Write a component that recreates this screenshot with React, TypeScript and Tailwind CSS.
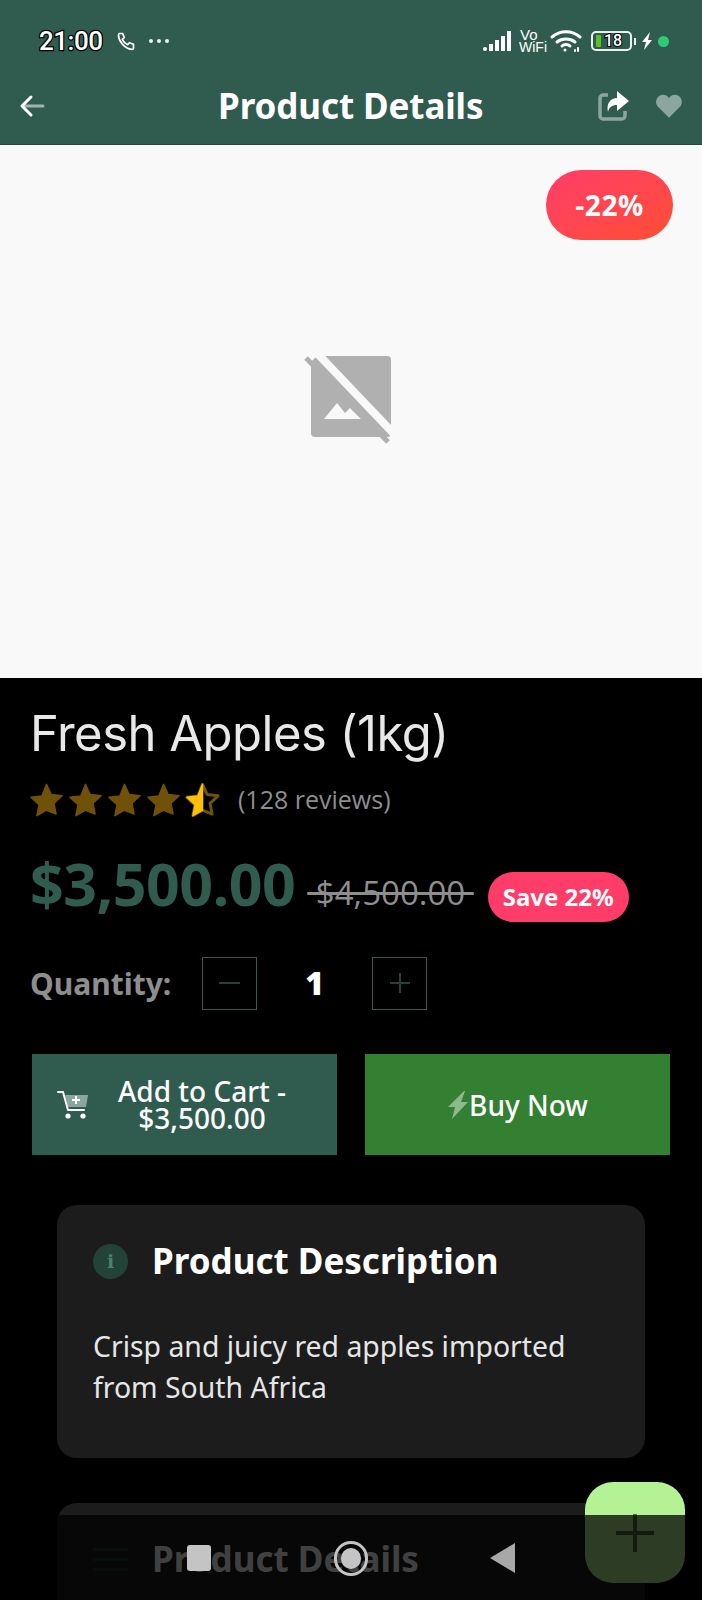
import React from "react";

const Star = ({ half }: { half?: boolean }) => {
  const d = "M12 1.6l3.1 6.7 7.3.9-5.4 5 1.4 7.2L12 18.8l-6.4 3.6L7 15.2l-5.4-5 7.3-.9z";
  return (
    <svg width="39" height="36" viewBox="0 0 24 24" className="shrink-0">
      {half ? (
        <>
          <path d={d} fill="none" stroke="#6f5208" strokeWidth="2" strokeLinejoin="round" />
          <path d="M12 1.6v17.2l-6.4 3.6L7 15.2l-5.4-5 7.3-.9z" fill="#ffc107" stroke="#ffc107" strokeWidth="1" strokeLinejoin="round" />
        </>
      ) : (
        <path d={d} fill="#6f5208" stroke="#6f5208" strokeWidth="1" strokeLinejoin="round" />
      )}
    </svg>
  );
};

export default function App() {
  return (
    <div className="relative w-[702px] h-[1600px] overflow-hidden bg-black font-['Inter','Noto_Sans',sans-serif] text-white">
      {/* header */}
      <header className="h-[145px] bg-[#305c4f] border-b border-[#26463c] flex flex-col">
        <div className="mt-[26px] h-[30px] flex items-center pl-[39px] pr-[33px]">
          <span className="font-['Roboto',sans-serif] text-[26px] font-medium tracking-[-0.5px] [-webkit-text-stroke:2.5px_black] [paint-order:stroke_fill]">21:00</span>
          <svg width="20" height="20" viewBox="0 0 24 24" className="ml-[14px]" fill="none" stroke="#fff" strokeWidth="2" strokeLinecap="round" strokeLinejoin="round">
            <path d="M4 3h4l2 5-2.5 2a14 14 0 0 0 6.500 6.500l2-2.500 5 2v4c0 1-1 2-2 2C10 21 3 12 3 5c0-1 0-2 1-2z" />
          </svg>
          <div className="ml-[13px] flex gap-[4px]">
            <span className="w-[4px] h-[4px] rounded-full bg-white/90" />
            <span className="w-[4px] h-[4px] rounded-full bg-white/90" />
            <span className="w-[4px] h-[4px] rounded-full bg-white/90" />
          </div>
          <div className="ml-auto flex items-center">
            <div className="flex items-end gap-[2px] h-[20px]">
              <span className="w-[4px] h-[4px] rounded-full bg-white" />
              <span className="w-[4px] h-[7px] bg-white" />
              <span className="w-[4px] h-[11px] bg-white" />
              <span className="w-[4px] h-[15px] bg-white" />
              <span className="w-[4px] h-[20px] bg-white" />
            </div>
            <div className="ml-[8px] flex flex-col items-start font-['Liberation_Sans',sans-serif] text-[14px] leading-[12px] font-normal">
              <span className="pl-[1px] text-[15px]">Vo</span>
              <span>WiFi</span>
            </div>
            <svg width="32" height="24" viewBox="0 0 32 24" className="ml-[3px]" fill="none" stroke="#fff" strokeWidth="3" strokeLinecap="round">
              <path d="M2 8C10 1 22 1 30 8" />
              <path d="M7 13c5-4 13-4 18 0" />
              <path d="M12 17c2-2 6-2 8 0" />
              <circle cx="15" cy="21" r="1.500" fill="#fff" stroke="none" />
              <path d="M25 21v1M28 19v3" strokeWidth="2" />
            </svg>
            <div className="ml-[9px] w-[41px] h-[20px] rounded-[5px] border-2 border-white/90 flex items-center pl-[3px]">
              <span className="w-[5px] h-[12px] bg-[#5cc21d] rounded-[1px]" />
              <span className="ml-[3px] font-['Roboto',sans-serif] text-[16px] leading-none font-medium [-webkit-text-stroke:2px_black] [paint-order:stroke_fill]">18</span>
            </div>
            <span className="ml-[2px] w-[2px] h-[7px] bg-white/90" />
            <svg width="14" height="20" viewBox="0 0 14 20" className="ml-[4px]" fill="#fff">
              <path d="M10 1L2 11h4l-2 8 8-10H8z" />
            </svg>
            <span className="ml-[4px] w-[11px] h-[11px] rounded-full bg-[#2ecc71]" />
          </div>
        </div>
        <div className="mt-[30px] flex items-center h-[40px] pl-[19px] pr-[18px]">
          <svg width="26" height="24" viewBox="0 0 26 24" fill="none" strokeLinecap="round" strokeLinejoin="round" strokeWidth="3">
            <path d="M5 12h19" stroke="#9db5ad" />
            <path d="M12 3l-9 9 9 9" stroke="#fff" />
          </svg>
          <h1 className="ml-[173px] text-[35px] leading-[40px] font-bold tracking-[-0.1px] font-['Noto_Sans',sans-serif] whitespace-nowrap">Product Details</h1>
          <svg width="32" height="30" viewBox="0 0 32 30" className="ml-auto mr-[2px]">
            <path d="M10 4H5a3 3 0 0 0-3 3v18a3 3 0 0 0 3 3h19a3 3 0 0 0 3-3v-5" fill="none" stroke="#8aa69e" strokeWidth="3.500" />
            <path d="M19 0L31 10 19 20V14C14 14 11 16 10 21 8 12 13 7 19 7z" fill="#fff" />
          </svg>
          <svg width="30" height="26" viewBox="0 0 24 22" className="ml-[22px]" fill="#8aa69e">
            <path d="M12 21L2.500 11.500C-.5 8 1.500 2 6.500 1.500c2.500-.2 4.500 1 5.500 3 1-2 3-3.200 5.500-3 5 .5 7 6.500 4 10z" />
          </svg>
        </div>
      </header>

      {/* image placeholder */}
      <section className="relative h-[533px] bg-[#f9f9f9] flex items-center justify-center">
        <svg width="92" height="92" viewBox="304 353 92 92" className="mt-[-26px] ml-[-2px]">
          <path d="M317 356h70a4 4 0 0 1 4 4v73a4 4 0 0 1-4 4h-72a4 4 0 0 1-4-4v-71z" fill="#b0b0b0" />
          <path d="M315 351l81 85" stroke="#f9f9f9" strokeWidth="8" />
          <path d="M306 358l82 84" stroke="#b0b0b0" strokeWidth="5" />
          <path d="M324 419l13-16 8 10 5-5 11 11z" fill="#f9f9f9" />
        </svg>
        <div className="absolute right-[29px] top-[25px] w-[127px] h-[70px] rounded-full bg-gradient-to-br from-[#ff3d68] to-[#ff4d2e] flex items-center justify-center font-['Open_Sans',sans-serif] text-[28px] font-bold tracking-[0.5px]">
          -22%
        </div>
      </section>

      {/* info */}
      <section className="px-[30px]">
        <h2 className="mt-[31px] text-[49px] leading-[50px] font-normal text-[#e8e8e8] font-['Inter',sans-serif] tracking-[-0.5px] whitespace-nowrap">Fresh Apples (1kg)</h2>
        <div className="mt-[23px] ml-[-3px] flex items-center h-[36px]">
          <Star />
          <Star />
          <Star />
          <Star />
          <Star half />
          <span className="ml-[16px] text-[25px] text-[#8e8e8e] font-['Open_Sans',sans-serif] whitespace-nowrap">(128 reviews)</span>
        </div>
        <div className="mt-[30px] flex items-center h-[70px] whitespace-nowrap">
          <span className="text-[59px] leading-none font-bold text-[#305c4f] font-['Open_Sans',sans-serif] tracking-[-0.5px]">$3,500.00</span>
          <span className="ml-[12px] mt-[18px] text-[33px] leading-none text-[#8e8e8e] line-through font-['Open_Sans',sans-serif]">{"\u00a0$4,500.00\u00a0"}</span>
          <span className="ml-[14px] mt-[27px] w-[141px] h-[50px] rounded-full bg-[#ff3d68] flex items-center justify-center text-[24px] font-bold font-['Noto_Sans',sans-serif]">Save 22%</span>
        </div>
        <div className="mt-[38px] flex items-center h-[54px]">
          <span className="w-[172px] text-[30px] font-bold text-[#8e8e8e] font-['Noto_Sans',sans-serif] whitespace-nowrap">Quantity:</span>
          <div className="w-[55px] h-[53px] border border-[#325d50] flex items-center justify-center">
            <span className="w-[21px] h-[2px] bg-[#254438]" />
          </div>
          <span className="w-[115px] text-center text-[32px] font-extrabold font-['Open_Sans',sans-serif]">1</span>
          <div className="w-[55px] h-[53px] border border-[#325d50] flex items-center justify-center">
            <svg width="20" height="20" viewBox="0 0 20 20" stroke="#254438" strokeWidth="2">
              <path d="M10 0v20M0 10h20" />
            </svg>
          </div>
        </div>
      </section>

      {/* buttons */}
      <div className="mt-[44px] mx-[32px] flex gap-[28px]">
        <button className="w-[305px] h-[101px] bg-[#305c4f] flex items-center pl-[25px] pr-[22px]">
          <svg width="32" height="30" viewBox="0 0 32 30" className="shrink-0">
            <path d="M8 5h23l-2 12H11z" fill="#8aa69e" />
            <path d="M1 2h5l5 18h16" fill="none" stroke="#fff" strokeWidth="2" strokeLinecap="round" strokeLinejoin="round" />
            <circle cx="11" cy="26" r="2.600" fill="#fff" />
            <circle cx="26" cy="26" r="2.600" fill="#fff" />
            <path d="M19 6v8M15 10h8" stroke="#fff" strokeWidth="2" />
          </svg>
          <span className="flex-1 text-center text-[28px] leading-[27px] font-medium font-['Noto_Sans',sans-serif] whitespace-nowrap">Add to Cart -<br />$3,500.00</span>
        </button>
        <button className="w-[305px] h-[101px] bg-[#338033] flex items-center justify-center text-[28px] font-medium font-['Noto_Sans',sans-serif]">
          <svg width="22" height="30" viewBox="0 0 22 30" fill="#8cba8c">
            <path d="M17 1L1 17h7L5 29l16-17h-7l4-11z" />
          </svg>
          <span>Buy Now</span>
        </button>
      </div>

      {/* description card */}
      <article className="mt-[50px] mx-[57px] h-[253px] rounded-[20px] bg-[#1c1c1c] pl-[36px] pr-[30px] pt-[38px]">
        <div className="flex items-center h-[36px]">
          <span className="w-[35px] h-[35px] rounded-full bg-[#234238] flex items-center justify-center text-[#4a7f6c] text-[19px] font-bold font-['DejaVu_Serif',serif]">i</span>
          <h3 className="ml-[24px] text-[35px] font-bold font-['Noto_Sans',sans-serif] whitespace-nowrap">Product Description</h3>
        </div>
        <p className="mt-[47px] text-[28.4px] leading-[41px] text-[#e6e6e6] font-['Noto_Sans',sans-serif]">Crisp and juicy red apples imported from South Africa</p>
      </article>

      {/* details card */}
      <article className="mt-[45px] mx-[57px] h-[200px] rounded-[20px] bg-[#1c1c1c] pl-[36px] pt-[38px]">
        <div className="flex items-center h-[36px]">
          <span className="w-[35px] h-[35px] flex flex-col justify-center gap-[7px]">
            <span className="h-[3px] bg-[#1e3a30]" />
            <span className="h-[3px] bg-[#1e3a30]" />
            <span className="h-[3px] bg-[#1e3a30]" />
          </span>
          <h3 className="ml-[24px] text-[35px] font-bold font-['Noto_Sans',sans-serif] whitespace-nowrap">Product Details</h3>
        </div>
      </article>

      {/* fab */}
      <div className="absolute left-[585px] top-[1482px] w-[100px] h-[101px] rounded-[28px] bg-[#b5f295] flex items-center justify-center">
        <svg width="38" height="38" viewBox="0 0 38 38" stroke="#4a6e34" strokeWidth="4">
          <path d="M19 0v38M0 19h38" />
        </svg>
      </div>

      {/* system nav overlay */}
      <div className="absolute inset-x-0 top-[1515px] bottom-0 bg-black/75 flex items-start">
        <span className="absolute left-[187px] top-[30px] w-[24px] h-[26px] rounded-[3px] bg-[#c4c4c4]" />
        <span className="absolute left-[334px] top-[26px] w-[34px] h-[35px] rounded-full border-[3px] border-[#c4c4c4] flex items-center justify-center">
          <span className="w-[20px] h-[21px] rounded-full bg-[#c4c4c4]" />
        </span>
        <svg width="26" height="30" viewBox="0 0 26 30" className="absolute left-[490px] top-[28px]" fill="#a8a8a8">
          <path d="M25 0v30L0 15z" />
        </svg>
      </div>
    </div>
  );
}
